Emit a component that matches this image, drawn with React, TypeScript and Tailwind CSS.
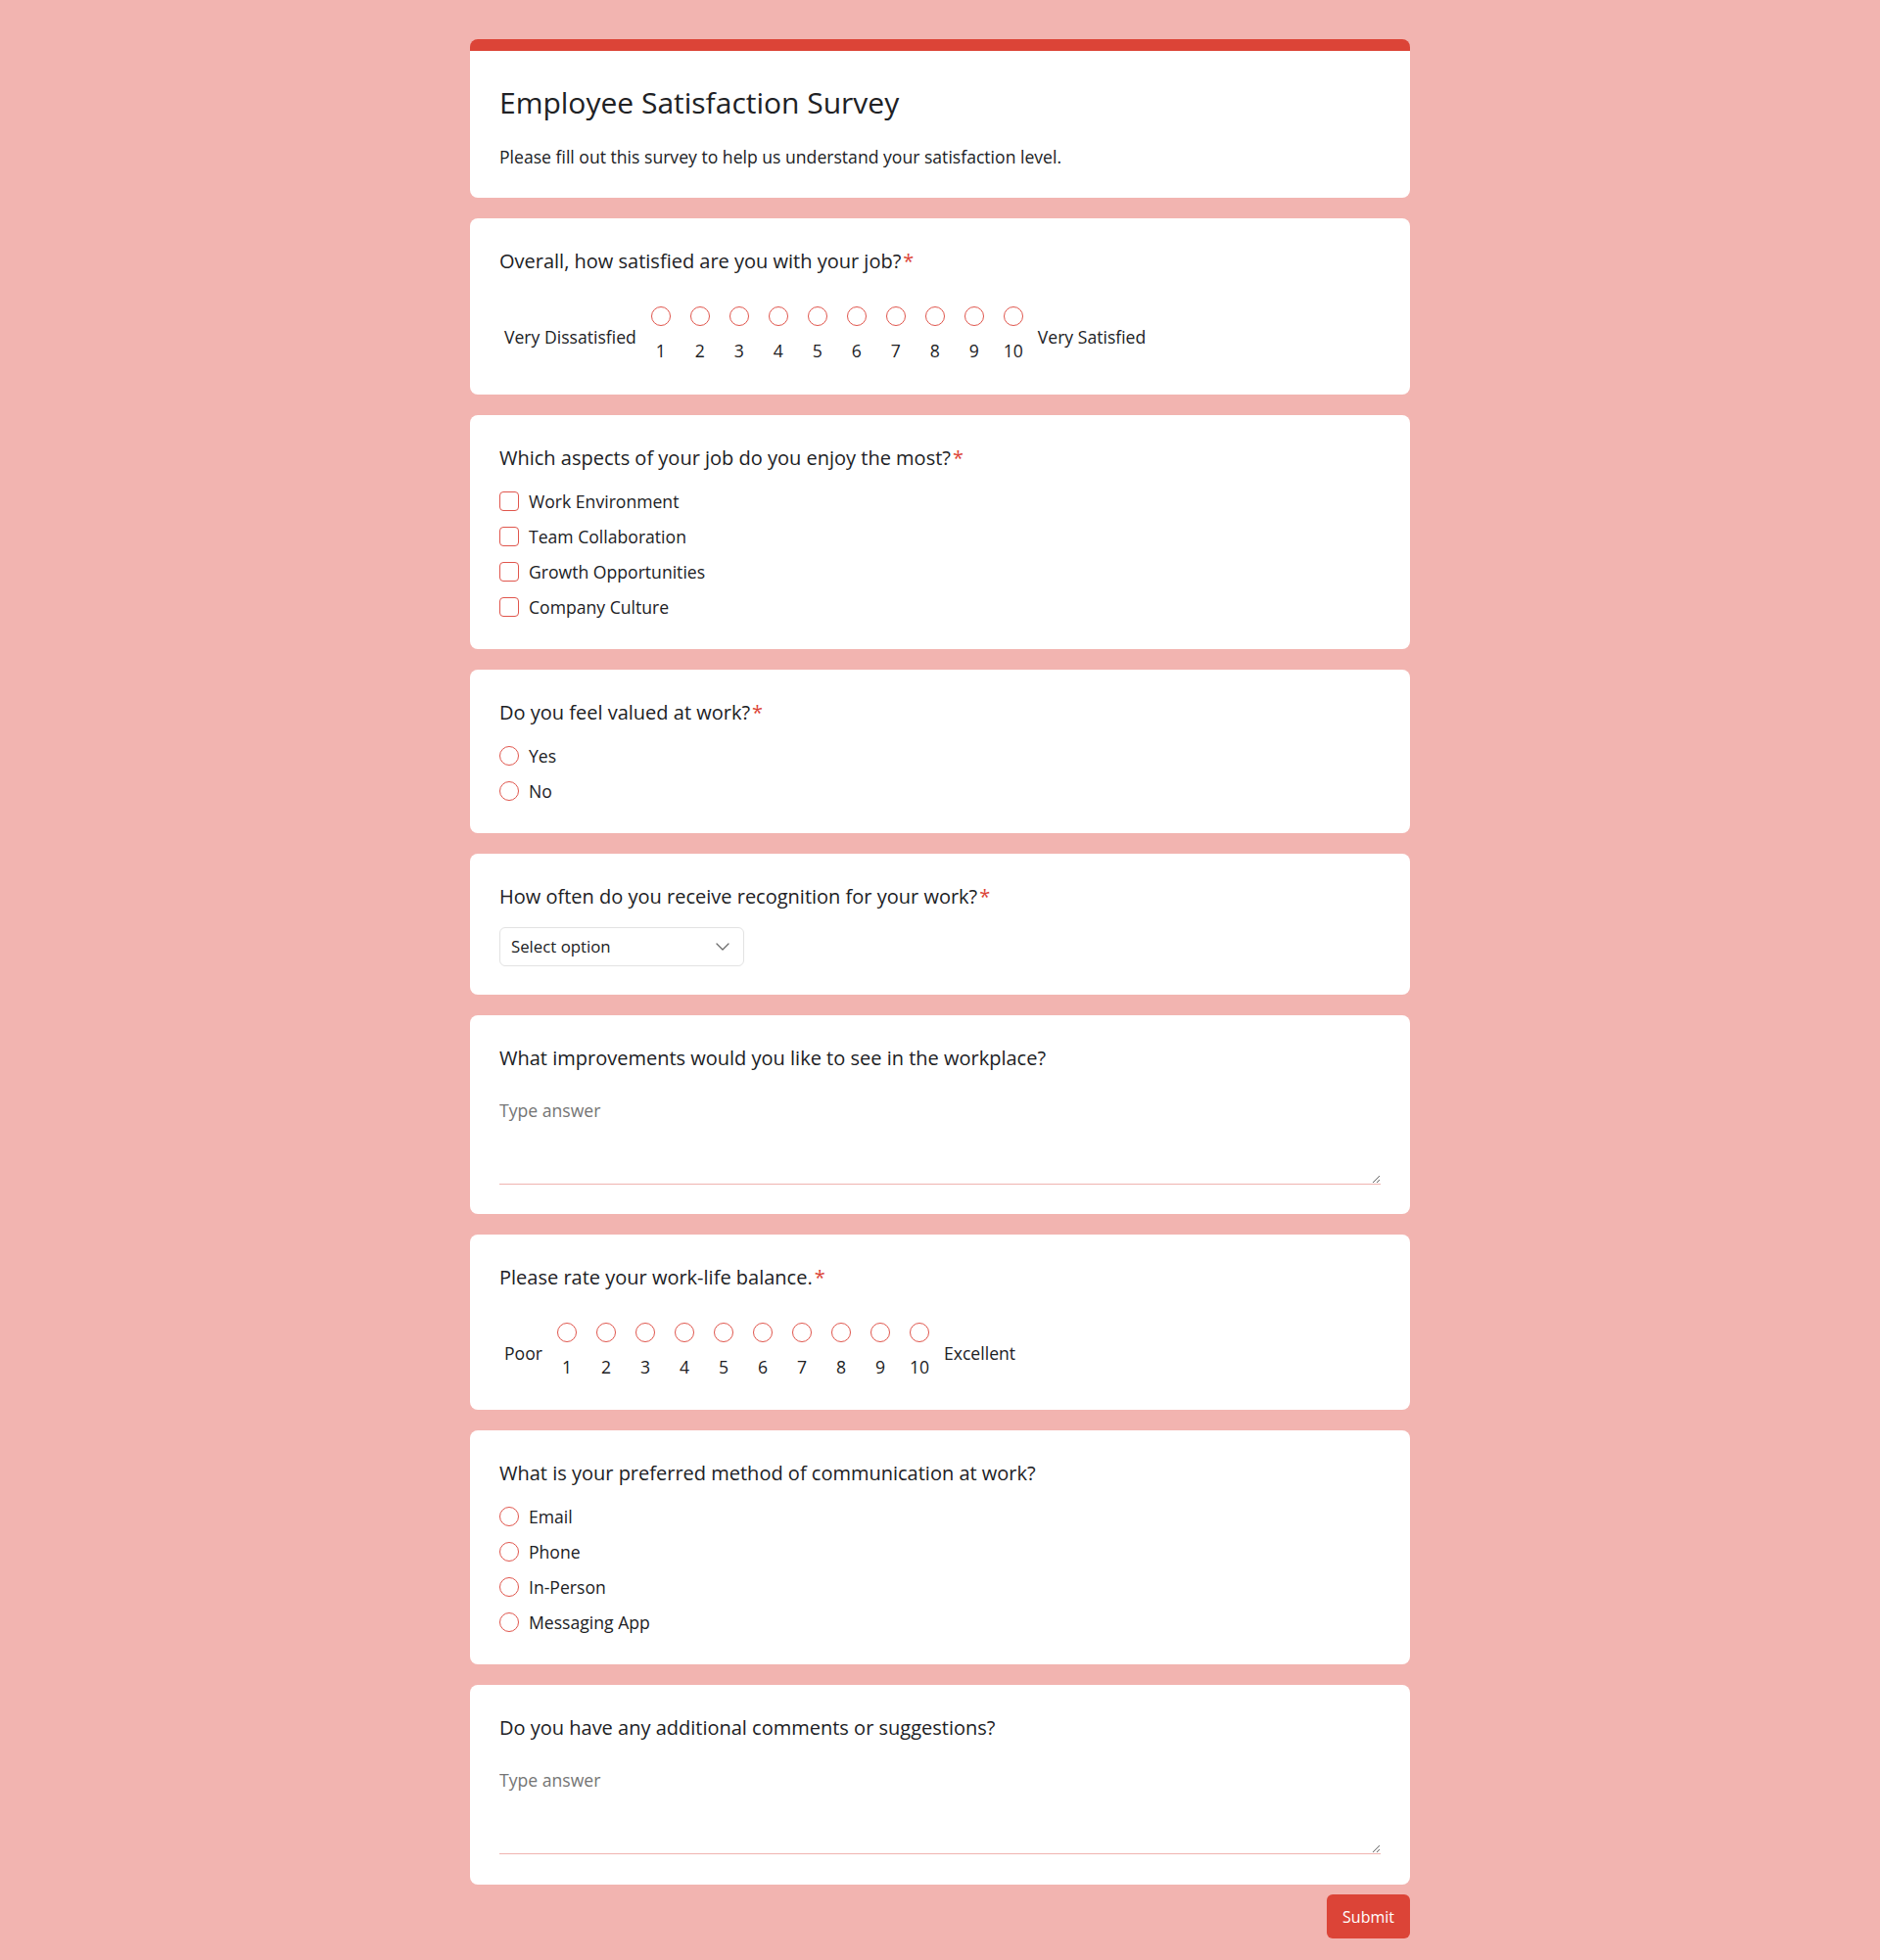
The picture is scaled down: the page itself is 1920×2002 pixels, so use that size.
import React from "react";
import { ChevronDown } from "lucide-react";

function Question({ text, required }: { text: string; required?: boolean }) {
  return (
    <div className="text-[20px] leading-[27px] text-[#202124]">
      {text}
      {required && <span className="ml-[2px] text-[#dc4437]">*</span>}
    </div>
  );
}

function Card({ children, className = "" }: { children: React.ReactNode; className?: string }) {
  return <div className={`rounded-lg bg-white px-[30px] pt-[30px] ${className}`}>{children}</div>;
}

function Scale({ left, right }: { left: string; right: string }) {
  const nums = [1, 2, 3, 4, 5, 6, 7, 8, 9, 10];
  return (
    <div className="mt-[33px] flex items-center">
      <span className="px-[5px] pt-[5px] text-[17.6px] leading-6">{left}</span>
      {nums.map((n) => (
        <div key={n} className="flex w-10 flex-col items-center">
          <span className="block h-5 w-5 rounded-full border-[1.5px] border-[#e0564d]" />
          <span className="mt-[13px] text-[17.6px] leading-6">{n}</span>
        </div>
      ))}
      <span className="px-[5px] pt-[5px] text-[17.6px] leading-6">{right}</span>
    </div>
  );
}

function Options({ items, type }: { items: string[]; type: "radio" | "checkbox" }) {
  return (
    <div className="mt-[19px] flex flex-col gap-[12px]">
      {items.map((it) => (
        <div key={it} className="flex h-6 items-center">
          <span
            className={
              type === "radio"
                ? "block h-5 w-5 shrink-0 rounded-full border-[1.5px] border-[#e0564d]"
                : "block h-5 w-5 shrink-0 rounded-[4px] border-[1.5px] border-[#e0564d]"
            }
          />
          <span className="ml-[10px] text-[17.6px] leading-6 text-[#202124]">{it}</span>
        </div>
      ))}
    </div>
  );
}

function TextAnswer() {
  return (
    <textarea
      placeholder="Type answer"
      className="mt-[16px] block h-[100px] w-full resize-y border-0 border-b border-[#f0b4b0] bg-transparent px-0 pt-[12px] text-[17.6px] leading-6 outline-none placeholder:text-[#757575]"
    />
  );
}

export default function App() {
  return (
    <div className="min-h-screen bg-[#f2b4b0] pb-[22px] pt-[40px] font-['Open_Sans',sans-serif] text-[#202124]">
      <div className="mx-auto flex w-[960px] flex-col">
        <div className="flex flex-col gap-[21px]">
          <div className="rounded-lg border-t-[12px] border-[#dc4437] bg-white px-[30px] pb-[30px] pt-[32px]">
            <h1 className="text-[30px] font-normal leading-[42px] text-[#202124]">Employee Satisfaction Survey</h1>
            <p className="mt-[22px] text-[17.6px] leading-6 text-[#202124]">
              Please fill out this survey to help us understand your satisfaction level.
            </p>
          </div>

          <Card className="pb-[33px]">
            <Question text="Overall, how satisfied are you with your job?" required />
            <Scale left="Very Dissatisfied" right="Very Satisfied" />
          </Card>

          <Card className="pb-[31px]">
            <Question text="Which aspects of your job do you enjoy the most?" required />
            <Options
              type="checkbox"
              items={["Work Environment", "Team Collaboration", "Growth Opportunities", "Company Culture"]}
            />
          </Card>

          <Card className="pb-[31px]">
            <Question text="Do you feel valued at work?" required />
            <Options type="radio" items={["Yes", "No"]} />
          </Card>

          <Card className="pb-[29px]">
            <Question text="How often do you receive recognition for your work?" required />
            <div className="mt-[18px] flex h-10 w-[250px] items-center justify-between rounded-md border border-[#e2e2e2] bg-white pl-[11px] pr-[9px]">
              <span className="text-[16.8px] leading-6 text-[#202124]">Select option</span>
              <ChevronDown size={24} strokeWidth={1.3} color="#6b6b6b" />
            </div>
          </Card>

          <Card className="pb-[30px]">
            <Question text="What improvements would you like to see in the workplace?" />
            <TextAnswer />
          </Card>

          <Card className="pb-[32px]">
            <Question text="Please rate your work-life balance." required />
            <Scale left="Poor" right="Excellent" />
          </Card>

          <Card className="pb-[31px]">
            <Question text="What is your preferred method of communication at work?" />
            <Options type="radio" items={["Email", "Phone", "In-Person", "Messaging App"]} />
          </Card>

          <Card className="pb-[31px]">
            <Question text="Do you have any additional comments or suggestions?" />
            <TextAnswer />
          </Card>
        </div>

        <div className="mt-[10px] flex justify-end">
          <button className="h-[45px] rounded-md bg-[#dc4437] px-4 text-[16px] leading-6 text-white">Submit</button>
        </div>
      </div>
    </div>
  );
}
